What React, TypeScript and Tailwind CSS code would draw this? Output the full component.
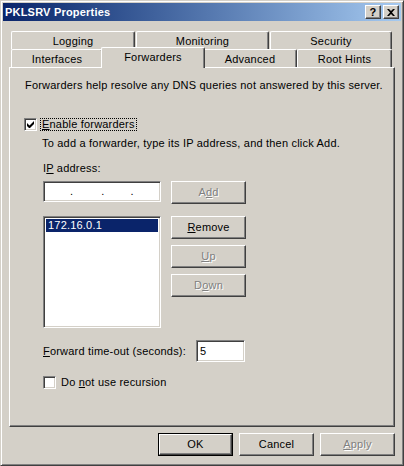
import type { ReactNode } from "react"

const raised =
	"border border-t-white border-l-white border-r-[#404040] border-b-[#404040] shadow-[inset_-1px_-1px_0_#808080]"
const sunken =
	"border border-t-[#808080] border-l-[#808080] border-r-white border-b-white shadow-[inset_1px_1px_0_#404040,inset_-1px_-1px_0_#D4D0C8]"

function Button({
	children,
	disabled,
	isDefault,
}: {
	children: ReactNode
	disabled?: boolean
	isDefault?: boolean
}) {
	const text = disabled
		? "text-[#808080] [text-shadow:1px_1px_0_#fff]"
		: "text-black"
	if (isDefault) {
		return (
			<div className="w-[75px] h-[23px] border border-black">
				<div
					className={`h-full flex items-center justify-center ${raised} ${text}`}
				>
					{children}
				</div>
			</div>
		)
	}
	return (
		<div
			className={`w-[75px] h-[23px] flex items-center justify-center ${raised} ${text}`}
		>
			{children}
		</div>
	)
}

function Checkbox({ checked }: { checked?: boolean }) {
	return (
		<div
			className={`w-[13px] h-[13px] shrink-0 bg-white flex items-center justify-center ${sunken}`}
		>
			{checked && (
				<svg width="7" height="7" viewBox="0 0 7 7">
					<path d="M0 2v3l2 2h1l4-4V0L2.5 4.5z" fill="black" />
				</svg>
			)}
		</div>
	)
}

function Tab({ label, className }: { label: string; className: string }) {
	return (
		<div className={className}>
			<div className="h-full pt-[2px] flex items-center justify-center border-t border-l border-white border-r border-r-[#404040] rounded-t-[2px] shadow-[inset_-1px_0_0_#808080]">
				{label}
			</div>
		</div>
	)
}

export default function App() {
	return (
		<div className="w-[404px] h-[466px] bg-[#D4D0C8] border border-t-[#D4D0C8] border-l-[#D4D0C8] border-r-[#404040] border-b-[#404040] shadow-[inset_1px_1px_0_#fff,inset_-1px_-1px_0_#808080] p-[2px] font-['Liberation_Sans',Arial,sans-serif] text-[11px] leading-[13px] tracking-[0.2px] text-black select-none">
			{/* title bar */}
			<div className="h-[18px] bg-linear-to-r from-[#0A246A] to-[#A6CAF0] flex items-center pl-[2px] pr-[2px]">
				<span className="flex-1 text-white font-bold text-[11px]">
					PKLSRV Properties
				</span>
				<div
					className={`w-[16px] h-[14px] bg-[#D4D0C8] flex items-center justify-center font-bold text-[11px] leading-none ${raised}`}
				>
					?
				</div>
				<div
					className={`ml-[2px] w-[16px] h-[14px] bg-[#D4D0C8] flex items-center justify-center ${raised}`}
				>
					<svg width="8" height="7" viewBox="0 0 8 7">
						<path
							d="M0 0h2l2 2 2-2h2L5 3.5 8 7H6L4 5 2 7H0l3-3.5z"
							fill="black"
						/>
					</svg>
				</div>
			</div>

			{/* tabs */}
			<div className="mt-[10px] pl-[8px]">
				<div className="flex h-[18px]">
					<Tab label="Logging" className="w-[124px]" />
					<Tab label="Monitoring" className="w-[134px] pl-[1px]" />
					<Tab label="Security" className="w-[123px] pl-[1px]" />
				</div>
				<div className="flex h-[18px]">
					<Tab label="Interfaces" className="w-[92px]" />
					<div className="w-[100px]">
						<div className="relative z-10 -mx-[2px] -mt-[2px] h-[21px] bg-[#D4D0C8] flex items-center justify-center pb-[2px] border-t border-l border-white border-r border-r-[#404040] rounded-t-[2px] shadow-[inset_-1px_0_0_#808080]">
							Forwarders
						</div>
					</div>
					<Tab label="Advanced" className="w-[94px]" />
					<Tab label="Root Hints" className="w-[95px]" />
				</div>
			</div>

			{/* page */}
			<div className="ml-[6px] w-[386px] h-[360px] border border-t-white border-l-white border-r-[#404040] border-b-[#404040] shadow-[inset_-1px_-1px_0_#808080] flex flex-col">
				<p className="mt-[11px] ml-[15px]">
					Forwarders help resolve any DNS queries not answered by this server.
				</p>

				<div className="mt-[26px] ml-[14px] flex items-center h-[13px]">
					<Checkbox checked />
					<span className="ml-[3px] border border-dotted border-black pl-[1px] pr-[1px] leading-[11px]">
						<u>E</u>nable forwarders
					</span>
				</div>

				<p className="mt-[6px] ml-[32px]">
					To add a forwarder, type its IP address, and then click Add.
				</p>

				<p className="mt-[12px] ml-[33px]">
					I<u>P</u> address:
				</p>

				<div className="mt-[6px] ml-[33px] flex gap-[10px] items-start">
					<div
						className={`w-[118px] h-[21px] bg-white flex items-center ${sunken}`}
					>
						<span className="ml-[26px]">.</span>
						<span className="ml-[28px]">.</span>
						<span className="ml-[26px]">.</span>
					</div>
					<Button disabled>
						A<u>d</u>d
					</Button>
				</div>

				<div className="mt-[12px] ml-[33px] flex gap-[10px] items-start">
					<div className={`w-[118px] h-[112px] bg-white p-[2px] ${sunken}`}>
						<div className="h-[13px] bg-[#0A246A] text-white pl-[2px]">
							172.16.0.1
						</div>
					</div>
					<div className="flex flex-col gap-[6px]">
						<Button>
							<u>R</u>emove
						</Button>
						<Button disabled>
							<u>U</u>p
						</Button>
						<Button disabled>
							D<u>o</u>wn
						</Button>
					</div>
				</div>

				<div className="mt-[12px] ml-[33px] flex items-center">
					<span className="w-[153px]">
						<u>F</u>orward time-out (seconds):
					</span>
					<div
						className={`w-[49px] h-[22px] bg-white flex items-center pl-[3px] ${sunken}`}
					>
						5
					</div>
				</div>

				<div className="mt-[14px] ml-[33px] flex items-center">
					<Checkbox />
					<span className="ml-[5px]">
						Do <u>n</u>ot use recursion
					</span>
				</div>
			</div>

			{/* dialog buttons */}
			<div className="mt-[6px] pr-[6px] flex justify-end gap-[6px]">
				<Button isDefault>OK</Button>
				<Button>Cancel</Button>
				<Button disabled>
					<u>A</u>pply
				</Button>
			</div>
		</div>
	)
}
